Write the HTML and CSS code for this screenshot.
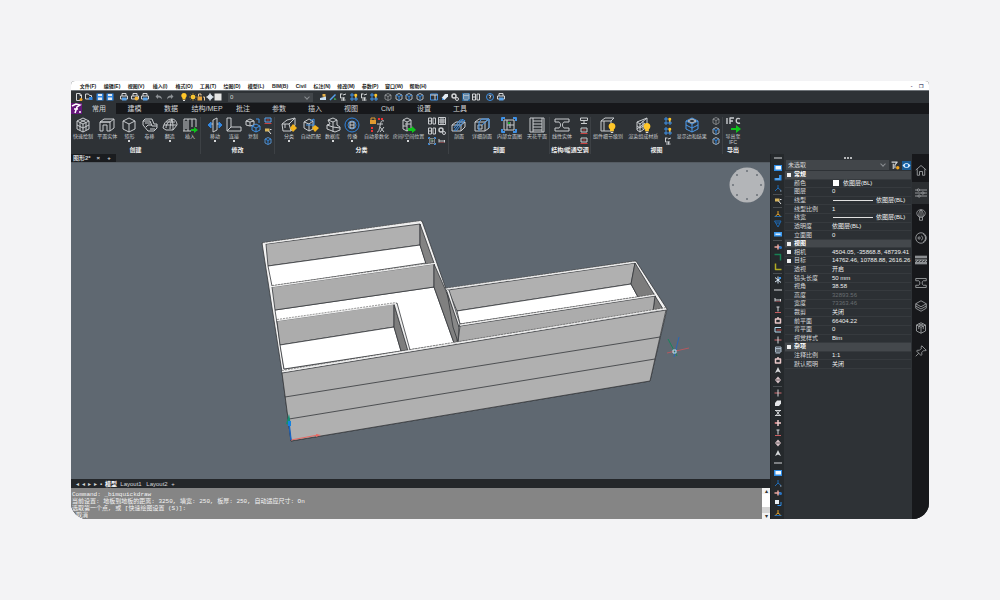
FILE: index.html
```html
<!DOCTYPE html>
<html lang="zh-CN">
<head>
<meta charset="utf-8">
<title>BIM</title>
<link rel="stylesheet" href="styles.css">
</head>
<body>
<svg class="sprite" aria-hidden="true">
    <symbol id="cube" viewBox="0 0 16 16"><path d="M8 1l6 3v8l-6 3-6-3V4zM2 4l6 3 6-3M8 7v8"/></symbol>
    <symbol id="quick" viewBox="0 0 16 16"><path d="M8 1l6 3v8l-6 3-6-3V4zM2 4l6 3 6-3M8 7v8M5 2.500l6 3v8M11 2.500l-6 3v8M2 8l6 3 6-3"/></symbol>
    <symbol id="solid" viewBox="0 0 16 16"><path d="M1 5l4-3h10v9l-4 3V5zM1 5h10M1 5v9h3V8h4v6h3M11 5l4-3"/></symbol>
    <symbol id="roll" viewBox="0 0 16 16"><path d="M1 4l2-2h7l2 5h3v4l-3 3H6L1 8zM1 4h7l2 5h5M4 10l2-2h4M3 6h5M8 12h5"/></symbol>
    <symbol id="dome" viewBox="0 0 16 16"><path d="M1 11C2 5 6 2 10 2c3 0 5 3 5 6l-4 5H4zM4 11c0-4 3-7 6-9M8 12c0-4 1-7 2-10M2 8h12M11 13c0-4 0-7-1-11M4 5h9"/></symbol>
    <symbol id="insert" viewBox="0 0 16 16"><path d="M2 14V2h12v8M6 2v12M10 2v8M1 14h8M4 4v8"/><path d="M9 12h3v-2l4 3-4 3v-2H9z" fill="#10c51c" stroke="none"/></symbol>
    <symbol id="move" viewBox="0 0 16 16"><path d="M6 3l4-2v12l-4 2zM3 7h3M10 7h3"/><path d="M4 5L1 8l3 3zM12 5l3 3-3 3z" fill="#3186e0" stroke="#3186e0"/></symbol>
    <symbol id="join" viewBox="0 0 16 16"><path d="M1 1h4v9h10v4H1zM5 10l-4 4"/></symbol>
    <symbol id="copy" viewBox="0 0 16 16"><path d="M1 4l4-2 4 2v4L5 9 1 8zM1 4l4 1 4-1M5 5v4"/><path d="M7 9l4-2 4 2v4l-4 2-4-2zM7 9l4 2 4-2M11 11v4M11 2h3v4" stroke="#3f91e6"/></symbol>
    <symbol id="classify" viewBox="0 0 16 16"><path d="M1 7l5-4 8-2v7l-4 6H2zM1 7h7l6-6M8 7l2 7M4 7v4"/><path d="M12 7l4 4-4 4-3-4z" fill="#f3b31d" stroke="none"/></symbol>
    <symbol id="match" viewBox="0 0 16 16"><path d="M1 5l5-3 4 2v8l-4 2-5-3zM1 5l5 2 4-3M6 7v7"/><path d="M7 4l4-2v7M3 8h8" stroke="#3f91e6"/><path d="M12 8l4 3-4 4-3-4z" fill="#f3b31d" stroke="none"/></symbol>
    <symbol id="data" viewBox="0 0 16 16"><path d="M3 3l5-2 4 2v5l3 2v3l-5 2-8-3V8l3-1zM3 3l5 2 4-2M8 5v5l7 1M2 8l6 2v5"/></symbol>
    <symbol id="spread" viewBox="0 0 16 16"><circle cx="8" cy="8" r="7" stroke="#3186e0"/><circle cx="8" cy="8" r="4" stroke="#3186e0"/><path d="M6 5h4v6H6zM6 8h4"/></symbol>
    <symbol id="param" viewBox="0 0 16 16"><path d="M15 4c-3-1-3 1-4 5s-1 6-3 6M8 7h6M11 10l4 5M15 10l-4 5"/><path d="M1 3h6v4H1z" fill="#e09a2f" stroke="none"/><path d="M2 3V1h4v2" stroke="#e09a2f"/><path d="M9 2h6M3 10v5" stroke="#e33" stroke-width="2" stroke-dasharray="2 1"/></symbol>
    <symbol id="room" viewBox="0 0 16 16"><path d="M3 3l4-2 4 2v9l-4 2-4-2zM3 3l4 2 4-2M7 5v9M5 7h6M3 9h4"/><path d="M8 11h4V9l4 4-4 3v-2H8z" fill="#10c51c" stroke="none"/></symbol>
    <symbol id="section" viewBox="0 0 16 16"><path d="M1 8l4-3h9v5l-4 4H1zM1 8h9l4-3M10 8v6"/><path d="M3 14L12 2M5 14l9-11M3 11L9 3h4" stroke="#3f91e6"/></symbol>
    <symbol id="detail" viewBox="0 0 16 16"><path d="M1 5l4-3h10v9l-4 3H1zM1 5h10v9M11 5l4-3M4 8h4v4H4z"/><path d="M5 14V5l3-3h7v9M8 8l7-6" stroke="#3f91e6"/></symbol>
    <symbol id="elev" viewBox="0 0 16 16"><path d="M3 3h10v10H3zM6 3v10M6 8h7M9 5v6"/><path d="M1 4V1h3M12 1h3v3M15 12v3h-3M4 15H1v-3" stroke="#3f91e6" stroke-width="2"/><path d="M7 5h2v2H7z" fill="#18a82c" stroke="none"/></symbol>
    <symbol id="plan" viewBox="0 0 16 16"><path d="M1 1h14v14H1zM4 1v14M4 4h9M4 7h9M4 10h9M4 13h9M13 1v14"/></symbol>
    <symbol id="beam" viewBox="0 0 16 16"><path d="M1 2h14v3h-5c-2 1-2 5 0 6h5v3H1v-3h4c2-1 2-5 0-6H1z"/></symbol>
    <symbol id="lod" viewBox="0 0 16 16"><path d="M1 4l4-3h9l-3 3v10H1zM1 4h10M4 4v10M11 4l3-3"/><use href="#bulb" x="7" y="6" width="10" height="10"/></symbol>
    <symbol id="render" viewBox="0 0 16 16"><path d="M2 5l10-4v9L5 15l-3-2zM2 5l3 2 7-6M5 7v8M2 9l3 2 7-4M8 4v8M2 12l8-6"/><use href="#bulb" x="7" y="6" width="10" height="10"/></symbol>
    <symbol id="edges" viewBox="0 0 16 16"><path d="M8 1l6 3v8l-6 3-6-3V4z" stroke="#4b9aec"/><path d="M2 4l6 3 6-3M8 7v8M2 8l6 3 6-3" stroke="#4b9aec"/><path d="M4 4l4-2 4 2-4 2z"/></symbol>
    <symbol id="ifc" viewBox="0 0 16 16"><path d="M2 1v6M5 7V1h4M5 4h3M15 2c-5-3-5 6 0 4" stroke-width="1.400"/><path d="M6 11h5V8l5 4-5 4v-3H6z" fill="#10c51c" stroke="none"/></symbol>
    <symbol id="bluecube" viewBox="0 0 16 16"><path d="M8 1l6 3v8l-6 3-6-3V4z" stroke-width="1.600"/><path d="M2 4l6 3 6-3M8 7v8" stroke="#3186e0" stroke-width="2"/></symbol>
    <symbol id="grid" viewBox="0 0 16 16"><path d="M1 1h14v14H1zM1 6h14M1 10h14M6 1v14M10 1v14" stroke-width="2"/></symbol>
    <symbol id="pair" viewBox="0 0 16 16"><path d="M1 2h6v12H1zM10 2h5v12h-5zM1 8h6" stroke-width="2"/></symbol>
    <symbol id="dots" viewBox="0 0 16 16"><path d="M2 2h4v4H2zM2 10h4v4H2zM10 10h4v4h-4z" stroke="#3f91e6" stroke-width="2"/><use href="#bulb" x="7" y="0" width="9" height="12"/></symbol>
    <symbol id="tee" viewBox="0 0 16 16"><path d="M1 2h14v5H1zM8 7v5M2 13h12" stroke-width="2"/></symbol>
    <symbol id="redtee" viewBox="0 0 16 16"><path d="M2 2h12v8H2z" stroke-width="2"/><path d="M1 13h14M5 6h6" stroke="#c9403f" stroke-width="2"/></symbol>
    <symbol id="newdoc" viewBox="0 0 16 16"><path d="M3 1h7l3 3v11H3zM10 1v4h3" stroke-width="2"/><circle cx="12" cy="13" r="3" fill="#f3a31d" stroke="none"/></symbol>
    <symbol id="open" viewBox="0 0 16 16"><path d="M1 2h6l2 3h4v7H1z" stroke-width="2"/><path d="M8 8h7v6H8z" fill="#3186e0" stroke="none"/></symbol>
    <symbol id="save" viewBox="0 0 16 16"><path d="M1 1h14v14H1z" fill="#3186e0" stroke="none"/><path d="M4 2h8v4H4zM4 9h8v5H4z" fill="#e4e8ec" stroke="none"/></symbol>
    <symbol id="print" viewBox="0 0 16 16"><path d="M4 6V1h8v5M1 6h14v6H1z" stroke-width="2"/><path d="M4 9h9v6H4z" fill="#5aa2e8" stroke="none"/></symbol>
    <symbol id="plot" viewBox="0 0 16 16"><path d="M4 6V1h8v5M1 6h14v6H1z" stroke-width="2"/><circle cx="11" cy="11" r="4" fill="#f0b43c" stroke="none"/></symbol>
    <symbol id="undo" viewBox="0 0 16 16"><path d="M6 2L1 7l5 5V9c4 0 6 1 8 4 0-5-3-8-8-8z" fill="#8d9195" stroke="none"/></symbol>
    <symbol id="redo" viewBox="0 0 16 16"><path d="M10 2l5 5-5 5V9c-4 0-6 1-8 4 0-5 3-8 8-8z" fill="#8d9195" stroke="none"/></symbol>
    <symbol id="bulb" viewBox="0 0 16 16"><path d="M8 0C2 0 1 7 5 10v3h6v-3c4-3 3-10-3-10z" fill="#ffc629" stroke="none"/><path d="M6 15h4" stroke="#ddd" stroke-width="2"/></symbol>
    <symbol id="sun" viewBox="0 0 16 16"><circle cx="8" cy="8" r="4.500" fill="#ffd23a" stroke="none"/><path d="M8 0v16M0 8h16M3 3l10 10M13 3L3 13" stroke="#f0b52a"/></symbol>
    <symbol id="lock" viewBox="0 0 16 16"><path d="M1 7h9v8H1z" fill="#e8a43c" stroke="none"/><path d="M3 7V2h5v3M12 8h3v7" stroke="#e8c89a" stroke-width="2"/></symbol>
    <symbol id="plus" viewBox="0 0 16 16"><circle cx="8" cy="8" r="5" fill="#cdd9e6" stroke="none"/><path d="M8 1v14M1 8h14" stroke="#dfe6ee" stroke-width="3"/></symbol>
    <symbol id="white" viewBox="0 0 16 16"><path d="M1 1h14v14H1z" fill="#e6e6e6" stroke="none"/></symbol>
    <symbol id="brush" viewBox="0 0 16 16"><path d="M7 7V2h6v6z" fill="#e8b24a" stroke="none"/><path d="M2 10l12-3v7H2z" fill="#c9dff2" stroke="none"/></symbol>
    <symbol id="pen" viewBox="0 0 16 16"><path d="M2 14L13 3" stroke="#55a2ef" stroke-width="3"/><path d="M11 9l4 4-5 1z" fill="#42b452" stroke="none"/></symbol>
    <symbol id="tree" viewBox="0 0 16 16"><path d="M2 2h5M3 2v8h9M8 4l6-2M9 9v6M4 14h9" stroke-width="2"/></symbol>
    <symbol id="panelb" viewBox="0 0 16 16"><path d="M1 2h14v12H1z" stroke="#3f91e6" stroke-width="2"/><path d="M1 4h14M10 4v10" stroke-width="2"/></symbol>
    <symbol id="eraser" viewBox="0 0 16 16"><path d="M8 2h6v5l-7 7H2V9z" fill="#e4edf5" stroke="none"/><path d="M2 9l5 5H2z" fill="#3f91e6" stroke="none"/></symbol>
    <symbol id="gear" viewBox="0 0 16 16"><circle cx="6" cy="6" r="4" stroke-width="3"/><circle cx="12" cy="12" r="3" stroke-width="2"/></symbol>
    <symbol id="help" viewBox="0 0 16 16"><circle cx="8" cy="8" r="7" stroke="#3f91e6" stroke-width="2"/><path d="M6 6c0-3 5-2 4 0L8 8v3" stroke-width="2"/></symbol>
    <symbol id="filter" viewBox="0 0 16 16"><path d="M1 2h10L7 7v6M4 5v9" stroke-width="2"/><circle cx="12" cy="12" r="3" fill="#f0a41d" stroke="none"/></symbol>
    <symbol id="eye" viewBox="0 0 16 16"><path d="M1 8c4-6 10-6 14 0-4 6-10 6-14 0z" fill="#dff0ff" stroke="none"/><circle cx="8" cy="8" r="3" fill="#1168b8" stroke="none"/></symbol>
    <symbol id="card" viewBox="0 0 16 16"><path d="M0 2h16v12H0z" fill="#2f8de6" stroke="none"/><path d="M3 4h11v7H3z" fill="#f3f8fc" stroke="none"/></symbol>
    <symbol id="step" viewBox="0 0 16 16"><path d="M1 8h9V2h5v11H1z" fill="#2f8de6" stroke="none"/><path d="M3 10h9" stroke="#cfe6fb"/></symbol>
    <symbol id="nodes" viewBox="0 0 16 16"><path d="M2 14L8 8V2M8 8l6 5" stroke="#1f6bb5" stroke-width="2"/><path d="M12 13h3v2h-3z" fill="#9ab" stroke="none"/></symbol>
    <symbol id="keyy" viewBox="0 0 16 16"><path d="M2 3h9v6H2z" fill="#d6b45e" stroke="none"/><path d="M9 8l5 6M12 5h3" stroke="#ddd" stroke-width="2"/></symbol>
    <symbol id="fork" viewBox="0 0 16 16"><path d="M1 13h14" stroke="#1f6bb5" stroke-width="2"/><path d="M8 2v6l-5 4M8 8l5 4" stroke="#e5a32b" stroke-width="2"/></symbol>
    <symbol id="funnel" viewBox="0 0 16 16"><path d="M1 2h13L8 14zM4 6h8" stroke="#1f6bb5" stroke-width="2"/></symbol>
    <symbol id="tag" viewBox="0 0 16 16"><path d="M0 4h16v9H0z" fill="#3c9af0" stroke="none"/><path d="M3 7h10v3H3z" fill="#d8ecfd" stroke="none"/></symbol>
    <symbol id="target" viewBox="0 0 16 16"><path d="M1 8h12M8 3v10" stroke="#e8a7a0" stroke-width="3"/><circle cx="13" cy="9" r="3" fill="#2876c9" stroke="none"/></symbol>
    <symbol id="corner" viewBox="0 0 16 16"><path d="M1 3h12v12" stroke="#178052" stroke-width="3"/></symbol>
    <symbol id="ell" viewBox="0 0 16 16"><path d="M3 1v12h12" stroke="#b1aa23" stroke-width="3"/></symbol>
    <symbol id="burst" viewBox="0 0 16 16"><path d="M2 3l12 10M8 1v14M2 12L14 4" stroke="#d8e6f2" stroke-width="2"/><path d="M10 2h4v4h-4z" fill="#348fe8" stroke="none"/></symbol>
    <symbol id="pinkh" viewBox="0 0 16 16"><path d="M2 4v7M2 8h12M13 6v5" stroke-width="2"/><path d="M3 11h10" stroke="#c85d60"/></symbol>
    <symbol id="pinkv" viewBox="0 0 16 16"><path d="M5 2h6M8 2v9" stroke-width="2"/><path d="M2 13h12" stroke="#c85d60" stroke-width="2"/></symbol>
    <symbol id="pinkbox" viewBox="0 0 16 16"><path d="M3 6h10v8H3zM8 2v5" stroke="#e9c9c9" stroke-width="3"/></symbol>
    <symbol id="channel" viewBox="0 0 16 16"><path d="M14 3H2v9h12" stroke="#b9dcef" stroke-width="2"/><path d="M5 8h10" stroke="#c94747" stroke-width="2"/></symbol>
    <symbol id="stack" viewBox="0 0 16 16"><path d="M3 2h11v10H3zM2 5h12M3 8h11M3 14h9" stroke="#a8b7c5" stroke-width="2"/></symbol>
    <symbol id="cross" viewBox="0 0 16 16"><path d="M1 8h14" stroke="#d26c70" stroke-width="2"/><path d="M8 1v14" stroke-width="2"/></symbol>
    <symbol id="crossred" viewBox="0 0 16 16"><path d="M2 8h12M8 2v12" stroke="#eec9c9" stroke-width="3"/><path d="M1 8h4" stroke="#d2565b" stroke-width="2"/></symbol>
    <symbol id="blob" viewBox="0 0 16 16"><path d="M2 8l4-5h8v6l-4 5H2z" fill="#e4e6e8" stroke="none"/></symbol>
    <symbol id="diamond" viewBox="0 0 16 16"><path d="M8 1l6 7-6 7-6-7z" fill="#d9c3c7" stroke="none"/><path d="M4 8h8" stroke="#6a6065" stroke-width="2"/></symbol>
    <symbol id="ibar" viewBox="0 0 16 16"><path d="M2 3h12M2 13h12M5 4l6 8M11 4l-6 8" stroke-width="2"/></symbol>
    <symbol id="arrowup" viewBox="0 0 16 16"><path d="M8 2l6 12-6-3-6 3z" fill="#d6d8da" stroke="none"/></symbol>
    <symbol id="squares" viewBox="0 0 16 16"><path d="M2 2h8v8H2z" fill="#e8eef3" stroke="none"/><path d="M7 13h7V6" stroke="#2f8de6" stroke-width="2"/></symbol>
    <symbol id="home" viewBox="0 0 16 16"><path d="M1 8l7-6 7 6M3 7v8h3v-5h4v5h3V7"/></symbol>
    <symbol id="sliders" viewBox="0 0 16 16"><path d="M0 4h3M6 4h10M0 8h9M12 8h4M0 12h4M7 12h9"/><circle cx="4.500" cy="4" r="1.500"/><circle cx="10.500" cy="8" r="1.500"/><circle cx="5.500" cy="12" r="1.500"/></symbol>
    <symbol id="balloon" viewBox="0 0 16 16"><path d="M6 11C0 7 2 1 8 1s8 6 2 10v4H6zM6 11h4M6 11C4 7 6 2 8 1c2 1 4 6 2 10M8 1v10"/></symbol>
    <symbol id="signal" viewBox="0 0 16 16"><circle cx="8" cy="8" r="7"/><path d="M8 5c3 1 3 5 0 6M11 3c4 2 4 8 0 10"/><circle cx="5.500" cy="8" r="1.500"/></symbol>
    <symbol id="bricks" viewBox="0 0 16 16"><path d="M0 3h16M0 5h16M0 8h16M0 11h16M0 13h16" stroke-width="1.400"/><path d="M1 11l3-3M5 11l3-3M9 11l3-3M13 11l3-3"/></symbol>
    <symbol id="ibeam" viewBox="0 0 16 16"><path d="M1 2h14v3h-4c-2 1-2 5 0 6h4v3H1v-3h4c2-1 2-5 0-6H1z"/></symbol>
    <symbol id="layers" viewBox="0 0 16 16"><path d="M8 1l7 4-7 4-7-4zM1 8l7 4 7-4M1 11l7 4 7-4M1 5v6M15 5v6"/></symbol>
    <symbol id="box" viewBox="0 0 16 16"><path d="M8 1l6 3v8l-6 3-6-3V4zM2 4l6 3 6-3M8 7v8M5 2.500l6 3v4M11 2.500l-6 3v4"/></symbol>
    <symbol id="pin" viewBox="0 0 16 16"><path d="M9 1l6 6-2 1-1-1-3 3v3l-1 1-6-6 1-1h3l3-3-1-1zM5 11l-4 4"/></symbol>
</svg>

<main class="app">
  <header>
    <nav class="menubar">
      <button>文件(F)</button><button>编辑(E)</button><button>视图(V)</button><button>插入(I)</button><button>格式(O)</button><button>工具(T)</button><button>绘图(D)</button><button>模型(L)</button><button>BIM(B)</button><button class="short">Civil</button><button>标注(N)</button><button>修改(M)</button><button>参数(P)</button><button>窗口(W)</button><button>帮助(H)</button>
      <span class="wincontrols"><button aria-label="最小化">-</button><button aria-label="还原">❐</button></span>
    </nav>

    <div class="quickbar">
      <div class="tools q1"><button><svg><use href="#newdoc"/></svg></button><button><svg><use href="#open"/></svg></button><button><svg><use href="#save"/></svg></button><button><svg><use href="#save"/></svg></button></div>
      <div class="tools q2"><button><svg><use href="#print"/></svg></button><button><svg><use href="#plot"/></svg></button><button><svg><use href="#print"/></svg></button></div>
      <div class="tools q3"><button><svg><use href="#undo"/></svg></button><button><svg><use href="#redo"/></svg></button></div>
      <div class="tools q4"><button><svg><use href="#bulb"/></svg></button><button><svg><use href="#sun"/></svg></button><button><svg><use href="#lock"/></svg></button><button><svg><use href="#plus"/></svg></button><button><svg><use href="#white"/></svg></button></div>
      <span class="combo"><select aria-label="图层"><option>0</option></select></span>
      <div class="tools q5"><button><svg><use href="#brush"/></svg></button><button><svg><use href="#pen"/></svg></button><button><svg><use href="#tree"/></svg></button><button><svg><use href="#dots"/></svg></button><button><svg><use href="#tree"/></svg></button><button><svg><use href="#dots"/></svg></button></div>
      <div class="tools q6"><button><svg><use href="#cube"/></svg></button><button><svg><use href="#bluecube"/></svg></button><button><svg><use href="#bluecube"/></svg></button><button><svg><use href="#bluecube"/></svg></button></div>
      <div class="tools q7"><button><svg><use href="#panelb"/></svg></button><button><svg><use href="#eraser"/></svg></button><button><svg><use href="#gear"/></svg></button><button class="lit"><svg><use href="#stack"/></svg></button><button><svg><use href="#pair"/></svg></button></div>
      <div class="tools q3"><button><svg><use href="#help"/></svg></button><button><svg><use href="#print"/></svg></button></div>
    </div>

    <nav class="tabs">
      <svg class="logo" viewBox="0 0 11 11" role="img" aria-label="logo"><rect width="11" height="11" fill="#65177a"/><path d="M1 3l4-2 4 1-3 2-2 6M3 6h4" fill="none" stroke="#fff" stroke-width="1.500"/><circle cx="9" cy="9" r="1" fill="#fff"/></svg>
      <button class="active">常用</button><button>建模</button><button>数据</button><button>结构/MEP</button><button>批注</button><button>参数</button><button>插入</button><button>视图</button><button>Civil</button><button>设置</button><button>工具</button>
    </nav>

    <div class="ribbon">
      <section class="group g1">
        <div class="items">
          <button><svg><use href="#quick"/></svg>快速绘制</button>
          <button><svg><use href="#solid"/></svg>平面实体</button>
          <button class="more"><svg><use href="#cube"/></svg>矩形</button>
          <button><svg><use href="#roll"/></svg>卷移</button>
          <button class="more"><svg><use href="#dome"/></svg>翻造</button>
          <button><svg><use href="#insert"/></svg>插入</button>
        </div><h2>创建</h2>
      </section>
      <section class="group g2">
        <div class="items">
          <button class="more"><svg><use href="#move"/></svg>移动</button>
          <button class="more"><svg><use href="#join"/></svg>连接</button>
          <button><svg><use href="#copy"/></svg>复制</button>
          <div class="mini blue"><button><svg><use href="#redtee"/></svg></button><button><svg><use href="#keyy"/></svg></button><button><svg><use href="#bluecube"/></svg></button></div>
        </div><h2>修改</h2>
      </section>
      <section class="group g3">
        <div class="items">
          <button class="more"><svg><use href="#classify"/></svg>分类</button>
          <button><svg><use href="#match"/></svg>自动匹配</button>
          <button class="more"><svg><use href="#data"/></svg>数据库</button>
          <button class="more"><svg><use href="#spread"/></svg>传播</button>
          <button><svg><use href="#param"/></svg>自动参数化</button>
          <button class="more"><svg><use href="#room"/></svg>房间/空间位置</button>
          <div class="mini two"><button><svg><use href="#pair"/></svg></button><button><svg><use href="#grid"/></svg></button><button><svg><use href="#pair"/></svg></button><button><svg><use href="#gear"/></svg></button><button><svg><use href="#elev"/></svg></button><button><svg><use href="#pinkh"/></svg></button></div>
        </div><h2>分类</h2>
      </section>
      <section class="group g4">
        <div class="items">
          <button><svg><use href="#section"/></svg>剖面</button>
          <button><svg><use href="#detail"/></svg>详细剖面</button>
          <button><svg><use href="#elev"/></svg>内部立面图</button>
          <button><svg><use href="#plan"/></svg>天花平面</button>
        </div><h2>剖面</h2>
      </section>
      <section class="group g5">
        <div class="items">
          <button><svg><use href="#beam"/></svg>线性实体</button>
          <div class="mini"><button><svg><use href="#tee"/></svg></button><button><svg><use href="#redtee"/></svg></button><button><svg><use href="#redtee"/></svg></button></div>
        </div><h2>结构/暖通空调</h2>
      </section>
      <section class="group g6">
        <div class="items">
          <button><svg><use href="#lod"/></svg>组件细节级别</button>
          <button><svg><use href="#render"/></svg>渲染组成材质</button>
          <div class="mini"><button><svg><use href="#dots"/></svg></button><button><svg><use href="#dots"/></svg></button><button><svg><use href="#tree"/></svg></button></div>
          <button><svg><use href="#edges"/></svg>显示边和结果</button>
          <div class="mini"><button><svg><use href="#cube"/></svg></button><button><svg><use href="#bluecube"/></svg></button><button><svg><use href="#bluecube"/></svg></button></div>
        </div><h2>视图</h2>
      </section>
      <section class="group g7">
        <div class="items"><button><svg><use href="#ifc"/></svg>导出至<br>IFC</button></div><h2>导出</h2>
      </section>
    </div>
  </header>

  <div class="body">
    <div class="work">
      <div class="docs"><button class="active">图形2* <b>×</b></button><button>+</button></div>
      <div class="viewport">
        <svg viewBox="71 163 699 316" preserveAspectRatio="xMidYMid slice" role="img" aria-label="模型">
          <g stroke="#34363a" stroke-width=".8" stroke-linejoin="round">
            <path d="M262 243l160-22 24 68 190-28 31 48-17 72-359 60-9-69z" fill="#f3f3f3"/>
            <path d="M266 244l154-20v21l-152 21z" fill="#b0b0b0"/>
            <path d="M268 266l152-21 6 18-154 23z" fill="#fff"/>
            <path d="M420 224l14 39-8 1-6-19z" fill="#838383"/>
            <path d="M275 310l159-23 20 56-170 26z" fill="#fff"/>
            <path d="M272 287l162-23v23l-159 23z" fill="#acacac"/>
            <path d="M434 264l12 27 12 34-1 18h-3l-20-56z" fill="#808080"/>
            <path d="M277 321l117-17v23l-114 18z" fill="#acacac"/>
            <path d="M280 345l114-18 7 24-117 18z" fill="#fff"/>
            <path d="M394 304l14 46-7 1-7-24z" fill="#7d7d7d"/>
            <path d="M394 304l3-1 13 47-2 1z" fill="#eee"/>
            <path d="M448 290l187-27-4 21-174 27z" fill="#b0b0b0"/>
            <path d="M457 311l174-27 7 13-178 27z" fill="#fff"/>
            <path d="M635 263l28 46-10 2 2-15-17 1-7-13z" fill="#7c7c7c"/>
            <path d="M460 326l195-30-2 15-195 31z" fill="#acacac"/>
            <path d="M447 292l12 34-1 16-5-15z" fill="#888"/>
            <path d="M446 289l3 1 11 34-1 3z" fill="#eee"/>
            <path d="M282 373l384-63-16 71-359 60z" fill="#b0b0b0"/>
            <path d="M285 397l375-60M289 419l366-60" fill="none"/>
          </g>
          <path d="M282 371.500L666 308.500M272 286.500L434 263.500M460 325l195-30M277 320.500l119-17M263 243.500l158-22M446 289l189-27" stroke="#ededed" stroke-width="1.500" fill="none"/>
          <path d="M282 370.500L666 307.500M272 285.500L434 262.500M460 324l195-30M277 319.500l119-17M263 242.500l158-22M446 288l189-27" stroke="#555" stroke-width=".6" stroke-dasharray="2 1" fill="none"/>
          <path d="M291 440l27-5" stroke="#e86a64" fill="none"/><path d="M316 434l5 1-5 2zM324 433l2 3" fill="#e86a64"/>
          <path d="M291 440l-2-17" stroke="#1763c2" stroke-width="1.500"/><path d="M286 424l3-10 2 11z" fill="#128e72"/><path d="M288 421h3v5h-3z" fill="#1582e0"/>
          <path d="M667 353l22-5" stroke="#b4595f"/><path d="M668 339l9 17" stroke="#16865c"/><path d="M679 337l-5 20" stroke="#2867b6"/><path d="M673 350h3v3h-3z" fill="none" stroke="#bde0ee"/>
          <circle cx="747" cy="185" r="17.500" fill="#b3b5b8"/>
          <g fill="#6a7077"><circle cx="747" cy="171" r="1"/><circle cx="757" cy="175" r="1"/><circle cx="761" cy="185" r="1"/><circle cx="757" cy="195" r="1"/><circle cx="747" cy="199" r="1"/><circle cx="737" cy="195" r="1"/><circle cx="733" cy="185" r="1"/><circle cx="737" cy="175" r="1"/></g>
        </svg>
      </div>
      <nav class="layouts"><button>◂</button><button>◂</button><button>▸</button><button>▸</button><button>▪</button><button class="active">模型</button><button class="sheet">Layout1</button><button class="sheet">Layout2</button><button>+</button></nav>
      <div class="command">
        <div class="log"><p>Command: _bimquickdraw</p><p>当前设置: 地板到地板的距离: 3250, 墙宽: 250, 板厚: 250, 自动适应尺寸: On</p><p>选取第一个点, 或 [快速绘图设置 (S)]:</p><p class="prompt">取消</p></div>
        <div class="scroll"><button aria-label="向上">▴</button><span></span><button aria-label="向下">▾</button></div>
      </div>
    </div>

    <div class="toolstrip">
      <i></i><button><svg><use href="#card"/></svg></button><button><svg><use href="#step"/></svg></button><button><svg><use href="#nodes"/></svg></button><hr>
      <button><svg><use href="#keyy"/></svg></button><hr>
      <button><svg><use href="#fork"/></svg></button><button><svg><use href="#funnel"/></svg></button><button><svg><use href="#tag"/></svg></button><hr>
      <button><svg><use href="#target"/></svg></button><button><svg><use href="#corner"/></svg></button><button><svg><use href="#ell"/></svg></button><hr>
      <button><svg><use href="#burst"/></svg></button><i></i>
      <button><svg><use href="#pinkh"/></svg></button><button><svg><use href="#pinkv"/></svg></button><button><svg><use href="#pinkbox"/></svg></button><button><svg><use href="#channel"/></svg></button><button><svg><use href="#cross"/></svg></button><button><svg><use href="#stack"/></svg></button><button><svg><use href="#pinkbox"/></svg></button><button><svg><use href="#arrowup"/></svg></button><button><svg><use href="#diamond"/></svg></button><hr>
      <button><svg><use href="#cross"/></svg></button><button><svg><use href="#blob"/></svg></button><button><svg><use href="#ibar"/></svg></button><button><svg><use href="#crossred"/></svg></button><button><svg><use href="#pinkv"/></svg></button><button><svg><use href="#diamond"/></svg></button><button><svg><use href="#arrowup"/></svg></button><i></i>
      <button><svg><use href="#card"/></svg></button><button><svg><use href="#nodes"/></svg></button><button><svg><use href="#target"/></svg></button><button><svg><use href="#squares"/></svg></button><button><svg><use href="#fork"/></svg></button>
    </div>

    <aside class="props">
      <div class="grip"></div>
      <div class="picker"><span class="combo"><select aria-label="选择"><option>未选取</option></select></span><button><svg><use href="#filter"/></svg></button><button class="lit"><svg><use href="#eye"/></svg></button></div>
      <table>
        <colgroup><col class="mark"><col class="name"><col></colgroup>
        <tbody>
        <tr class="head"><td><i></i></td><th colspan="2">常规</th></tr>
        <tr><td></td><th>颜色</th><td><span class="swatch"></span>依图层(BL)</td></tr>
        <tr><td></td><th>图层</th><td>0</td></tr>
        <tr><td></td><th>线型</th><td><span class="line"></span>依图层(BL)</td></tr>
        <tr><td></td><th>线型比例</th><td>1</td></tr>
        <tr><td></td><th>线宽</th><td><span class="line"></span>依图层(BL)</td></tr>
        <tr><td></td><th>透明度</th><td>依图层(BL)</td></tr>
        <tr><td></td><th>立面图</th><td>0</td></tr>
        <tr class="head"><td><i></i></td><th colspan="2">视图</th></tr>
        <tr><td><i></i></td><th>相机</th><td>4504.05, -35868.8, 48739.41</td></tr>
        <tr><td><i></i></td><th>目标</th><td>14762.46, 10788.88, 2616.26</td></tr>
        <tr><td></td><th>透视</th><td>开启</td></tr>
        <tr><td></td><th>镜头长度</th><td>50 mm</td></tr>
        <tr><td></td><th>视角</th><td>38.58</td></tr>
        <tr class="dim"><td></td><th>高度</th><td>32893.56</td></tr>
        <tr class="dim"><td></td><th>宽度</th><td>73363.46</td></tr>
        <tr><td></td><th>裁剪</th><td>关闭</td></tr>
        <tr><td></td><th>前平面</th><td>66404.22</td></tr>
        <tr><td></td><th>背平面</th><td>0</td></tr>
        <tr><td></td><th>视觉样式</th><td>Bim</td></tr>
        <tr class="head"><td><i></i></td><th colspan="2">杂项</th></tr>
        <tr><td></td><th>注释比例</th><td>1:1</td></tr>
        <tr><td></td><th>默认照明</th><td>关闭</td></tr>
        </tbody>
      </table>
    </aside>

    <nav class="side">
      <div class="sidebtns"><button><svg><use href="#home"/></svg></button><button class="active"><svg><use href="#sliders"/></svg></button><button><svg><use href="#balloon"/></svg></button><button><svg><use href="#signal"/></svg></button><button><svg><use href="#bricks"/></svg></button><button><svg><use href="#ibeam"/></svg></button><button><svg><use href="#layers"/></svg></button><button><svg><use href="#box"/></svg></button><button><svg><use href="#pin"/></svg></button></div>
    </nav>
  </div>
</main>
</body>
</html>
```
FILE: styles.css
```css
* { box-sizing: border-box; }
body {
  margin: 0;
  min-height: 100vh;
  padding: 81px 71px;
  display: flex;
  background: #f3f3f5;
  font: 6px/8px "Liberation Sans", "Noto Sans CJK SC", sans-serif;
  color: #d4d6d8;
}
button, select { font: inherit; color: inherit; background: none; border: 0; padding: 0; margin: 0; }
button { display: flex; align-items: center; justify-content: center; white-space: nowrap; }
svg { display: block; flex: none; }
button svg { fill: none; stroke: currentColor; stroke-width: 1; stroke-linejoin: round; }
p, h2 { margin: 0; }
.sprite { position: absolute; width: 0; height: 0; }

.app {
  flex: 1;
  min-width: 0;
  display: flex;
  flex-direction: column;
  overflow: hidden;
  border-radius: 4px 4px 16px 16px;
  background: #2e3236;
}

/* Menu */
.menubar {
  height: 9px;
  display: flex;
  gap: 6px;
  padding: 0 4px 0 8px;
  background: #fff;
  color: #222;
  font-size: 5px;
  font-weight: 600;
}
.menubar button { width: 18px; }
.menubar .short { width: 12px; }
.wincontrols { margin-left: auto; display: flex; color: #557; }
.menubar .wincontrols button { width: 9px; }

/* Quick access */
.quickbar {
  height: 13px;
  display: flex;
  align-items: center;
  gap: 6px;
  padding-left: 4px;
  border-top: 1px solid #70757a;
}
.tools { display: flex; justify-content: space-between; }
.tools svg { width: 8px; height: 8px; }
.q1 { width: 39px; }
.q2 { width: 29px; }
.q3 { width: 19px; }
.q4 { width: 42px; }
.q5 { width: 59px; }
.q6 { width: 40px; }
.q7 { width: 50px; }
.lit { background: #1b5c94; }
.combo { position: relative; display: flex; height: 9px; background: #42464a; }
.combo::after {
  content: "";
  position: absolute;
  right: 4px;
  top: 2px;
  width: 3px;
  height: 3px;
  border: solid #8a8e92;
  border-width: 0 1px 1px 0;
  transform: rotate(45deg);
}
.combo select { flex: 1; appearance: none; padding-left: 2px; }
.quickbar .combo { width: 85px; }

/* Ribbon tabs */
.tabs {
  height: 11px;
  display: grid;
  grid-template-columns: 11px 34px 37px 36px 36px 36px 36px 36px 36px 37px 36px 36px;
  background: #17181b;
  font-size: 7px;
}
.tabs .active { background: #2e3236; }
.logo { width: 11px; height: 11px; }

/* Ribbon */
.ribbon { height: 40px; display: flex; padding-top: 3px; color: #c9cccf; }
.group {
  display: flex;
  flex-direction: column;
  justify-content: space-between;
  border-right: 1px solid #3d4145;
}
.group:last-child { border: 0; }
.group h2 { font-size: 6px; line-height: 8px; text-align: center; white-space: nowrap; color: #eee; }
.items { display: flex; justify-content: space-between; height: 27px; font-size: 5px; line-height: 6px; padding: 0 2px; }
.items > button { position: relative; flex-direction: column; justify-content: flex-start; }
.items > button > svg { width: 16px; height: 16px; }
.more::after {
  content: "";
  position: absolute;
  bottom: 2px;
  width: 2px;
  height: 2px;
  background: #d4d6d8;
}
.mini { display: grid; align-content: start; gap: 2px; }
.mini.two { grid-template-columns: 8px 8px; }
.mini svg { width: 8px; height: 8px; }
.mini.blue { color: #5ea5ee; }
.g1 { width: 130px; }
.g2 { width: 74px; }
.g2 .items { padding-left: 6px; }
.g3 { width: 174px; }
.g3 .items { padding-left: 6px; }
.g4 { width: 101px; }
.g5 { width: 41px; }
.g6 { width: 132px; }
.g7 { width: 20px; }

/* Body */
.body { flex: 1; display: flex; min-height: 0; }
.work { flex: 1; min-width: 0; display: flex; flex-direction: column; }
.docs { display: flex; height: 9px; border-bottom: 1px solid #555c63; font-weight: 600; }
.docs button { width: 14px; background: #1a1c1f; }
.docs .active { width: 31px; gap: 6px; }
.viewport { flex: 1 1 316px; min-height: 0; background: #5f6871; overflow: hidden; }
.viewport svg { width: 100%; height: 100%; }
.layouts { display: flex; height: 9px; padding-left: 3px; background: #24272a; }
.layouts button { min-width: 6px; }
.layouts .sheet { min-width: 26px; }
.layouts .active { font-weight: 700; color: #fff; padding: 0 1px; }
.command { display: flex; height: 31px; background: #858585; color: #f4f4f4; }
.log { flex: 1; padding: 3px 1px 0; font: 6px/7px "Liberation Mono", "Noto Sans CJK SC", monospace; }
.prompt { padding-left: 4px; }
.scroll { width: 8px; display: flex; flex-direction: column; background: #d4d4d4; color: #333; }
.scroll button { height: 6px; background: #f2f2f2; }
.scroll span { flex: 1; margin-bottom: 6px; background: #fff; }

/* Vertical tools */
.toolstrip {
  width: 14px;
  display: flex;
  flex-direction: column;
  align-items: center;
  gap: 2px;
  border-left: 1px solid #1e2124;
  background: #25292c;
}
.toolstrip svg { width: 8px; height: 8px; }
.toolstrip i { width: 8px; height: 8px; padding: 3px 0; flex: none; background: #7d8083 content-box; }
.toolstrip hr { width: 9px; height: 1px; margin: 0; border: 0; background: #4a4e52; }

/* Properties */
.props { width: 128px; padding: 0 1px; }
.grip { height: 5px; width: 8px; margin: 0 auto; border-bottom: 2px dotted #b6b8ba; border-top: 2px solid transparent; }
.picker { display: flex; align-items: center; gap: 2px; height: 12px; padding-left: 1px; }
.picker .combo { flex: 1; height: 10px; }
.picker svg { width: 9px; height: 9px; }
.props table { width: 100%; height: 198px; border-collapse: collapse; table-layout: fixed; background: #2c3034; }
.mark { width: 9px; }
.name { width: 38px; }
.props td, .props th { padding: 0; line-height: 7px; text-align: left; font-weight: 400; white-space: nowrap; border-bottom: 1px solid #363a3e; }
.props tr > td:first-child { padding-left: 2px; }
.props td:last-child { color: #f0f0f0; }
.props .head { background: #44484c; }
.props .head th { font-weight: 700; color: #fff; }
.props table i { display: block; width: 4px; height: 4px; background: #f0f0f0; }
.props .dim td:last-child { color: #696d71; }
.swatch { display: inline-block; width: 6px; height: 6px; margin: 0 4px 0 1px; vertical-align: middle; background: #fff; }
.line { display: inline-block; width: 40px; height: 1px; margin: 0 3px 0 1px; vertical-align: middle; background: #e0e0e0; }

/* Side tabs */
.side { width: 17px; padding-top: 5px; background: #17181b; color: #b4b7ba; }
.sidebtns { display: grid; grid-auto-rows: 1fr; height: 203px; }
.sidebtns svg { width: 12px; height: 12px; }
.sidebtns .active { background: #2b2e31; }
```
